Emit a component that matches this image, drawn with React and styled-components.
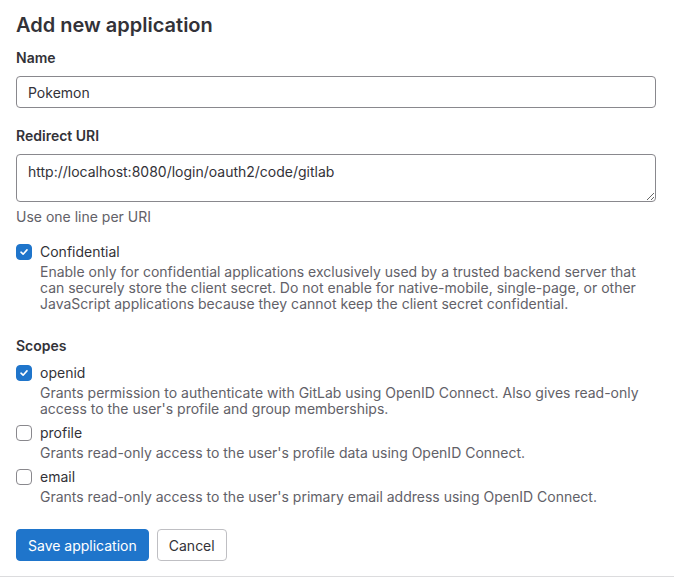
import { createGlobalStyle } from "styled-components";
import styled from "styled-components";

const GlobalStyle = createGlobalStyle`
  html, body {
    margin: 0;
    padding: 0;
    background: #fff;
  }
  body {
    font-family: Inter, "Noto Sans", "Liberation Sans", sans-serif;
    font-size: 14px;
    color: #333238;
  }
  * { box-sizing: border-box; }
`;

const Page = styled.div`
  padding: 12px 18px 0 16px;
  max-width: 674px;
`;

const Title = styled.h1`
  font-size: 20px;
  font-weight: 600;
  line-height: 26px;
  margin: 0 0 10px;
  color: #333238;
`;

const Group = styled.div`
  margin-bottom: ${(p) => p.mb ?? 18}px;
`;

const Label = styled.label`
  display: block;
  font-weight: 600;
  line-height: 20px;
  margin-bottom: ${(p) => p.mb ?? 8}px;
`;

const TextInput = styled.input`
  display: block;
  width: 100%;
  height: 32px;
  padding: 0 11px;
  font: inherit;
  color: #333238;
  border: 1px solid #89888d;
  border-radius: 4px;
  outline: none;
`;

const TextArea = styled.textarea`
  display: block;
  width: 100%;
  height: 48px;
  padding: 7px 11px;
  font: inherit;
  line-height: 20px;
  color: #333238;
  border: 1px solid #89888d;
  border-radius: 4px;
  outline: none;
  resize: vertical;
`;

const Help = styled.div`
  margin-top: 7px;
  color: #626168;
  line-height: 16px;
`;

const CheckRow = styled.div`
  display: grid;
  grid-template-columns: 16px 1fr;
  column-gap: 8px;
  margin-bottom: ${(p) => p.mb ?? 6}px;
`;

const Box = styled.span`
  width: 16px;
  height: 16px;
  margin-top: 2px;
  border-radius: 4px;
  border: 1px solid ${(p) => (p.checked ? "#1f75cb" : "#89888d")};
  background: ${(p) => (p.checked ? "#1f75cb" : "#fff")};
  display: flex;
  align-items: center;
  justify-content: center;
`;

const CheckLabel = styled.div`
  line-height: 20px;
`;

const CheckHelp = styled.div`
  grid-column: 2;
  color: #626168;
  line-height: 16px;
  margin-top: 2px;
`;

const Actions = styled.div`
  display: flex;
  gap: 8px;
  margin-top: 24px;
  padding-bottom: 15px;
`;

const Button = styled.button`
  height: 32px;
  padding: 0 11px;
  font: inherit;
  font-size: 14px;
  border-radius: 4px;
  border: 1px solid ${(p) => (p.primary ? "#1f75cb" : "#bfbfc3")};
  background: ${(p) => (p.primary ? "#1f75cb" : "#fff")};
  color: ${(p) => (p.primary ? "#fff" : "#333238")};
`;

const Footer = styled.div`
  border-top: 1px solid #dcdcde;
  height: 1px;
`;

function Check({ checked, label, help, mb }) {
  return (
    <CheckRow mb={mb}>
      <Box checked={checked}>
        {checked && (
          <svg width="10" height="10" viewBox="0 0 10 10">
            <path d="M2 5.2 L4.1 7.2 L8 2.9" fill="none" stroke="#fff" strokeWidth="1.6" strokeLinecap="round" strokeLinejoin="round" />
          </svg>
        )}
      </Box>
      <CheckLabel>{label}</CheckLabel>
      <CheckHelp>{help}</CheckHelp>
    </CheckRow>
  );
}

export default function App() {
  return (
    <>
      <GlobalStyle />
      <Page>
        <Title>Add new application</Title>
        <Group>
          <Label>Name</Label>
          <TextInput defaultValue="Pokemon" />
        </Group>
        <Group mb={17}>
          <Label>Redirect URI</Label>
          <TextArea defaultValue="http://localhost:8080/login/oauth2/code/gitlab" />
          <Help>Use one line per URI</Help>
        </Group>
        <Group mb={24}>
          <Check
            checked
            label="Confidential"
            help="Enable only for confidential applications exclusively used by a trusted backend server that can securely store the client secret. Do not enable for native-mobile, single-page, or other JavaScript applications because they cannot keep the client secret confidential."
          />
        </Group>
        <Group mb={0}>
          <Label mb={7}>Scopes</Label>
          <Check
            checked
            label="openid"
            help="Grants permission to authenticate with GitLab using OpenID Connect. Also gives read-only access to the user's profile and group memberships."
          />
          <Check
            label="profile"
            help="Grants read-only access to the user's profile data using OpenID Connect."
          />
          <Check
            label="email"
            help="Grants read-only access to the user's primary email address using OpenID Connect."
            mb={0}
          />
        </Group>
        <Actions>
          <Button primary>Save application</Button>
          <Button>Cancel</Button>
        </Actions>
      </Page>
      <Footer />
    </>
  );
}
